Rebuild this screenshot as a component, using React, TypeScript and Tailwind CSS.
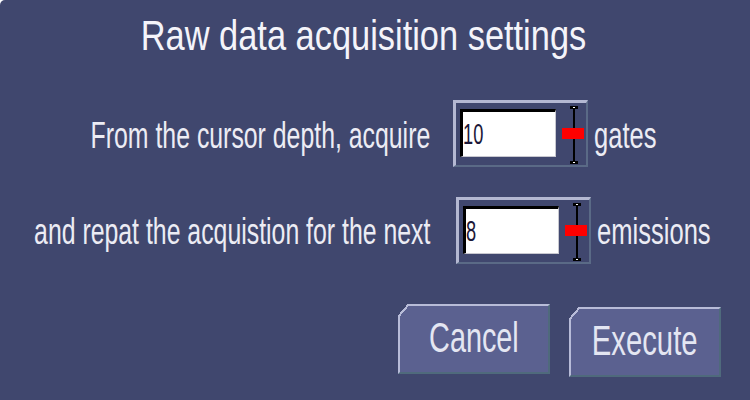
import React from "react";

function Spinner() {
  return (
    <svg width="24" height="58" viewBox="0 0 24 58" className="block">
      <rect x="11" y="1" width="2" height="56" fill="#000" />
      <rect x="8" y="0" width="8" height="3" fill="#000" />
      <rect x="11" y="1" width="2" height="1" fill="#fff" />
      <rect x="8" y="55" width="8" height="3" fill="#000" />
      <rect x="11" y="56" width="2" height="1" fill="#fff" />
      <rect x="0" y="22" width="22" height="11" fill="#ff0000" />
    </svg>
  );
}

function NumberField({ value }: { value: string }) {
  return (
    <div className="w-[135px] h-[67px] flex items-start border-t-[3px] border-l-[3px] border-r-[2px] border-b-[2px] border-t-[#b4b8d2] border-l-[#b4b8d2] border-r-[#5a6a86] border-b-[#5a6a86]">
      <div className="ml-[4px] mt-[6px] w-[96px] h-[48px] bg-white border-t-[3px] border-l-[3px] border-black border-r border-b border-r-[#c8c8d0] border-b-[#c8c8d0] flex items-center">
        <span className="inline-block origin-left scale-x-[0.63] text-[29px] leading-[29px] text-[#1c1838]">
          {value}
        </span>
      </div>
      <div className="ml-[6px] mt-[3px]">
        <Spinner />
      </div>
    </div>
  );
}

function Label({ children }: { children: React.ReactNode }) {
  return (
    <div className="w-[430px] flex justify-end shrink-0">
      <span className="shrink-0 inline-block origin-right scale-x-[0.69] text-[36px] leading-[36px] whitespace-nowrap">
        {children}
      </span>
    </div>
  );
}

function Unit({ children }: { children: React.ReactNode }) {
  return (
    <span className="inline-block origin-left scale-x-[0.71] text-[36px] leading-[36px] whitespace-nowrap">
      {children}
    </span>
  );
}

function ChamferButton({ label, scale }: { label: string; scale: string }) {
  return (
    <button className="relative w-[152px] h-[70px] bg-[#5b6190] border-t-[2px] border-l-[2px] border-r-[2px] border-b-[2px] border-t-[#b8bcd8] border-l-[#b8bcd8] border-r-[#4f6a7c] border-b-[#4f6a7c] flex justify-center items-start">
      <span className="absolute -left-[2px] -top-[2px] w-[11px] h-[13px] bg-[linear-gradient(to_bottom_right,#40476e_calc(50%-1px),#b8bcd8_calc(50%-1px),#b8bcd8_calc(50%+1px),transparent_calc(50%+1px))]" />
      <span className={`inline-block origin-center ${scale} mt-[10px] text-[43px] leading-[43px] text-[#e4e6f2] whitespace-nowrap`}>
        {label}
      </span>
    </button>
  );
}

export default function App() {
  return (
    <div className="w-[750px] h-[400px] bg-white overflow-hidden font-['Liberation_Sans',Arial,sans-serif]">
      <div className="w-full h-full bg-[#40476e] rounded-tl-[5px] text-[#ececf4] flex flex-col">
        {/* title */}
        <div className="h-[100px] pt-[14px] flex justify-center pr-[24px]">
          <span className="inline-block origin-center scale-x-[0.8] text-[43px] leading-[43px] whitespace-nowrap text-[#f4f4fa]">
            Raw data acquisition settings
          </span>
        </div>

        {/* gates row */}
        <div className="flex items-start">
          <div className="mt-[18px]">
            <Label>From the cursor depth, acquire</Label>
          </div>
          <div className="ml-[23px]">
            <NumberField value="10" />
          </div>
          <div className="ml-[6px] mt-[18px]">
            <Unit>gates</Unit>
          </div>
        </div>

        {/* emissions row */}
        <div className="flex items-start mt-[30px]">
          <div className="mt-[17px]">
            <Label>and repat the acquistion for the next</Label>
          </div>
          <div className="ml-[26px]">
            <NumberField value="8" />
          </div>
          <div className="ml-[6px] mt-[17px]">
            <Unit>emissions</Unit>
          </div>
        </div>

        {/* buttons */}
        <div className="flex items-start mt-[40px] pl-[398px]">
          <ChamferButton label="Cancel" scale="scale-x-[0.67]" />
          <div className="ml-[19px] mt-[3px]">
            <ChamferButton label="Execute" scale="scale-x-[0.68]" />
          </div>
        </div>
      </div>
    </div>
  );
}
